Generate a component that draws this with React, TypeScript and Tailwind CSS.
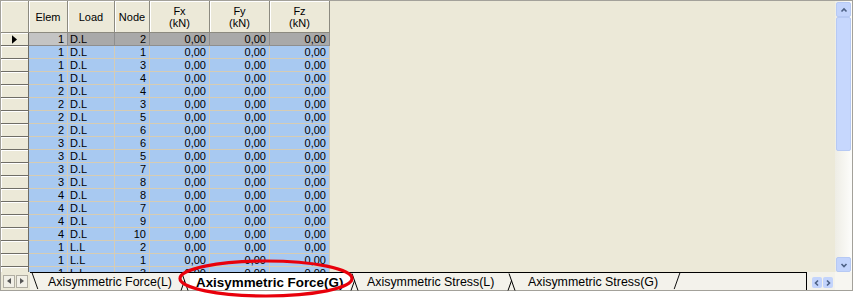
const rows: [number, string, number][] = [
  [1, "D.L", 2],
  [1, "D.L", 1],
  [1, "D.L", 3],
  [1, "D.L", 4],
  [2, "D.L", 4],
  [2, "D.L", 3],
  [2, "D.L", 5],
  [2, "D.L", 6],
  [3, "D.L", 6],
  [3, "D.L", 5],
  [3, "D.L", 7],
  [3, "D.L", 8],
  [4, "D.L", 8],
  [4, "D.L", 7],
  [4, "D.L", 9],
  [4, "D.L", 10],
  [1, "L.L", 2],
  [1, "L.L", 1],
  [1, "L.L", 3],
];

const cols = "grid grid-cols-[28px_39px_47px_35px_60px_60px_60px]";
const head =
  "flex items-center justify-center border-r border-b border-[#8c8a80] bg-[#ECE9D8] shadow-[inset_1px_1px_0_#ffffff] text-center leading-[12px]";

function Chevron({ dir }: { dir: "up" | "down" | "left" | "right" }) {
  const d = {
    up: "M2.5 6.5 L5 4 L7.5 6.5",
    down: "M2.5 4 L5 6.5 L7.5 4",
    left: "M6 2.5 L3.5 5 L6 7.5",
    right: "M4 2.5 L6.5 5 L4 7.5",
  }[dir];
  return (
    <svg viewBox="0 0 10 10" className="h-[10px] w-[10px]" aria-hidden>
      <path d={d} fill="none" stroke="#4d6185" strokeWidth="1.6" />
    </svg>
  );
}

function Junction() {
  return (
    <svg viewBox="0 0 10 18" className="h-[18px] w-[10px] shrink-0" aria-hidden>
      <path d="M2 0.5 L8 17.5" stroke="#000" strokeWidth="1" fill="none" />
      <path d="M1 17.5 L4.6 7.5" stroke="#000" strokeWidth="1" fill="none" />
    </svg>
  );
}

export default function App() {
  return (
    <div className="relative h-[300px] w-[856px] overflow-hidden bg-white font-['Liberation_Sans',Arial,sans-serif] text-black">
      <div className="flex h-[291px] w-[853px] flex-col border border-[#a3a19a] bg-[#ECE9D8]">
        {/* main area */}
        <div className="flex h-[271px]">
          <div className="flex-1 overflow-hidden">
            <div className="w-[329px] text-[11px]">
              <div className={`${cols} h-[32px]`}>
                <div className={head} />
                <div className={head}>Elem</div>
                <div className={head}>Load</div>
                <div className={head}>Node</div>
                <div className={`${head} flex-col`}>
                  <span>Fx</span>
                  <span>(kN)</span>
                </div>
                <div className={`${head} flex-col`}>
                  <span>Fy</span>
                  <span>(kN)</span>
                </div>
                <div className={`${head} flex-col`}>
                  <span>Fz</span>
                  <span>(kN)</span>
                </div>
              </div>
              {rows.map(([elem, load, node], i) => {
                const cur = i === 0;
                const cell = cur
                  ? "border-r border-b border-[#8e8e8e] bg-[#a9a9a9]"
                  : "border-r border-b border-[#d6ccb4] bg-[#a8c9f1]";
                return (
                  <div key={i} className={`${cols} h-[13px] leading-[12px]`}>
                    <div className="flex items-center justify-center border-r border-b border-[#6f6d66] bg-[#ECE9D8] shadow-[inset_1px_1px_0_#ffffff]">
                      {cur && (
                        <svg viewBox="0 0 6 10" className="h-[9px] w-[5px]" aria-hidden>
                          <path d="M0 0 L6 5 L0 10 Z" fill="#000" />
                        </svg>
                      )}
                    </div>
                    <div
                      className={`${cur ? "border-r border-b border-[#8e8e8e] bg-[#c4c4c4]" : cell} pr-[3px] text-right`}
                    >
                      {elem}
                    </div>
                    <div className={`${cell} pl-[2px]`}>{load}</div>
                    <div className={`${cell} pr-[3px] text-right`}>{node}</div>
                    <div className={`${cell} pr-[3px] text-right`}>0,00</div>
                    <div className={`${cell} pr-[3px] text-right`}>0,00</div>
                    <div className={`${cell} pr-[3px] text-right`}>0,00</div>
                  </div>
                );
              })}
            </div>
          </div>

          {/* vertical scrollbar */}
          <div className="flex w-[17px] flex-col bg-gradient-to-r from-[#eeede5] to-[#fdfdfb] px-[1px] pt-[1px]">
            <div className="flex h-[15px] items-center justify-center rounded-[2px] border border-[#b6c9f4] bg-[#c3d4fc]">
              <Chevron dir="up" />
            </div>
            <div className="h-[134px] rounded-[2px] border border-[#b6c9f4] bg-[#c6d7fd]" />
            <div className="flex-1" />
            <div className="flex h-[15px] items-center justify-center rounded-[2px] border border-[#b6c9f4] bg-[#c3d4fc]">
              <Chevron dir="down" />
            </div>
          </div>
        </div>

        {/* sheet tabs */}
        <div className="flex h-[18px] bg-[#f3f2eb] text-[12.4px]">
          <div className="flex w-[29px] items-center gap-[1px] bg-[#ECE9D8] pl-[2px]">
            <div className="flex h-[13px] w-[12px] items-center justify-center border border-[#b0ada2] bg-[#f1efe6]">
              <svg viewBox="0 0 4 6" className="h-[6px] w-[4px]" aria-hidden>
                <path d="M4 0 L0 3 L4 6 Z" fill="#555" />
              </svg>
            </div>
            <div className="flex h-[13px] w-[12px] items-center justify-center border border-[#b0ada2] bg-[#f1efe6]">
              <svg viewBox="0 0 4 6" className="h-[6px] w-[4px]" aria-hidden>
                <path d="M0 0 L4 3 L0 6 Z" fill="#555" />
              </svg>
            </div>
          </div>
          <div className="flex w-[777px] items-stretch border-t border-r border-black">
            <svg viewBox="0 0 9 18" className="h-[17px] w-[9px] shrink-0" aria-hidden>
              <path d="M2 0 L8 17" stroke="#000" strokeWidth="1" fill="none" />
            </svg>
            <span className="w-[141px] shrink-0 pl-[9px] pt-[2px] leading-[15px]">Axisymmetric Force(L)</span>
            <Junction />
            <span className="w-[160px] shrink-0 bg-white pl-[6px] pt-[2px] text-[13.4px] font-bold leading-[15px]">
              Axisymmetric Force(G)
            </span>
            <Junction />
            <span className="w-[147px] shrink-0 pl-[7px] pt-[2px] leading-[15px]">Axisymmetric Stress(L)</span>
            <Junction />
            <span className="w-[156px] shrink-0 pl-[11px] pt-[2px] leading-[15px]">Axisymmetric Stress(G)</span>
            <svg viewBox="0 0 9 18" className="h-[17px] w-[9px] shrink-0" aria-hidden>
              <path d="M1 17 L7 0" stroke="#000" strokeWidth="1" fill="none" />
            </svg>
          </div>
          <div className="flex w-[28px] items-center gap-[1px] pl-[5px] pt-[3px]">
            <div className="flex h-[11px] w-[10px] items-center justify-center rounded-[2px] bg-[#c3d4fc]">
              <Chevron dir="left" />
            </div>
            <div className="flex h-[11px] w-[10px] items-center justify-center rounded-[2px] bg-[#c3d4fc]">
              <Chevron dir="right" />
            </div>
          </div>
          <div className="flex-1 bg-[#f7f6f1]" />
        </div>
      </div>

      {/* red annotation ellipse */}
      <svg className="absolute left-[176px] top-[258px] h-[42px] w-[180px]" viewBox="0 0 180 42" aria-hidden>
        <ellipse cx="90" cy="20.5" rx="86" ry="17.5" fill="none" stroke="#e8000b" strokeWidth="3.2" />
      </svg>
    </div>
  );
}
